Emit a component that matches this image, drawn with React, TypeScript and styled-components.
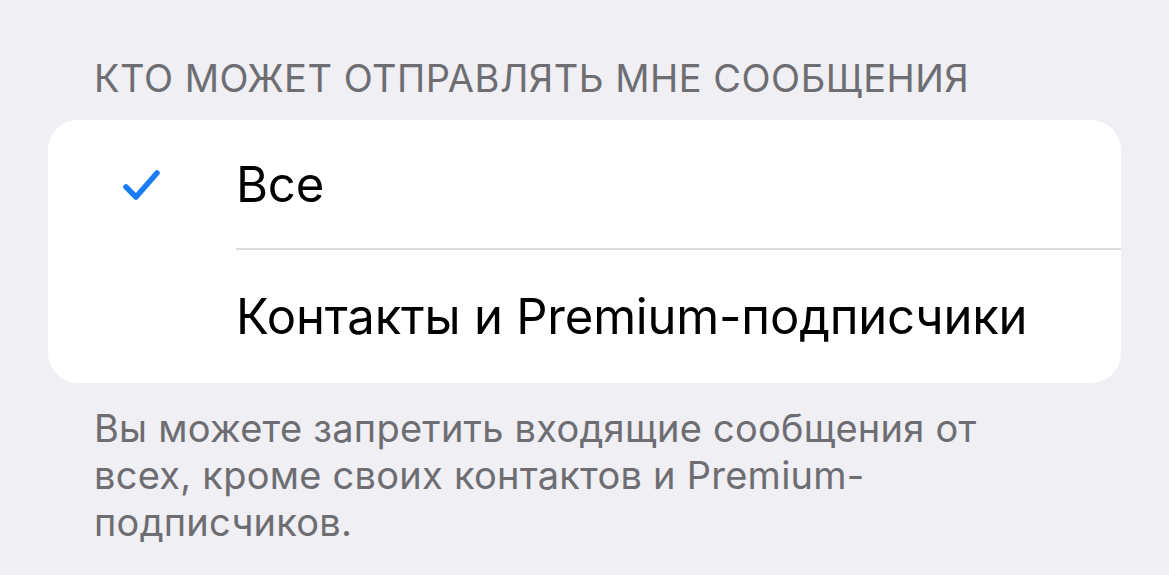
import React, { useState } from "react";
import styled, { createGlobalStyle } from "styled-components";

const GlobalStyle = createGlobalStyle`
  html, body {
    margin: 0;
    padding: 0;
    background: #efeff4;
  }
  body {
    font-family: Inter, "Noto Sans", "Liberation Sans", sans-serif;
    -webkit-font-smoothing: antialiased;
  }
`;

const Page = styled.div`
  width: 1169px;
  height: 575px;
  overflow: hidden;
  background: #efeff4;
  padding-top: 52px;
  box-sizing: border-box;
`;

const SectionHeader = styled.div`
  padding: 0 94px;
  font-size: 38px;
  line-height: 52px;
  color: #6d6d72;
  letter-spacing: 0.5px;
  text-transform: uppercase;
  margin-bottom: 16px;
`;

const Card = styled.div`
  margin: 0 48px;
  background: #ffffff;
  border-radius: 30px;
  overflow: hidden;
`;

const Row = styled.div<{ $last?: boolean }>`
  display: flex;
  align-items: center;
  height: ${(p) => (p.$last ? 133 : 130)}px;
  cursor: pointer;
`;

const CheckSlot = styled.div`
  width: 188px;
  flex: none;
  display: flex;
  align-items: center;
  padding-left: 75px;
  box-sizing: border-box;
`;

const Label = styled.div<{ $last?: boolean }>`
  flex: 1;
  height: 100%;
  display: flex;
  align-items: center;
  font-size: 49px;
  color: #000;
  letter-spacing: -0.2px;
  border-bottom: ${(p) => (p.$last ? "none" : "2px solid #dcdce0")};
  box-sizing: border-box;
`;

const Footer = styled.div`
  padding: 22px 94px 0;
  font-size: 38px;
  line-height: 47px;
  letter-spacing: 0.25px;
  color: #6d6d72;
`;

const Check = () => (
  <svg width="38" height="32" viewBox="0 0 38 32" fill="none">
    <path
      d="M3 18 L13 28 L34 4"
      stroke="#1a7cf5"
      strokeWidth="5.5"
      strokeLinecap="round"
      strokeLinejoin="round"
    />
  </svg>
);

const options = ["Все", "Контакты и Premium-подписчики"];

export default function App() {
  const [selected, setSelected] = useState(0);
  return (
    <Page>
      <GlobalStyle />
      <SectionHeader>Кто может отправлять мне сообщения</SectionHeader>
      <Card>
        {options.map((o, i) => (
          <Row key={o} $last={i === options.length - 1} onClick={() => setSelected(i)}>
            <CheckSlot>{selected === i && <Check />}</CheckSlot>
            <Label $last={i === options.length - 1}>{o}</Label>
          </Row>
        ))}
      </Card>
      <Footer>
        Вы можете запретить входящие сообщения от
        <br />
        всех, кроме своих контактов и Premium-
        <br />
        подписчиков.
      </Footer>
    </Page>
  );
}
